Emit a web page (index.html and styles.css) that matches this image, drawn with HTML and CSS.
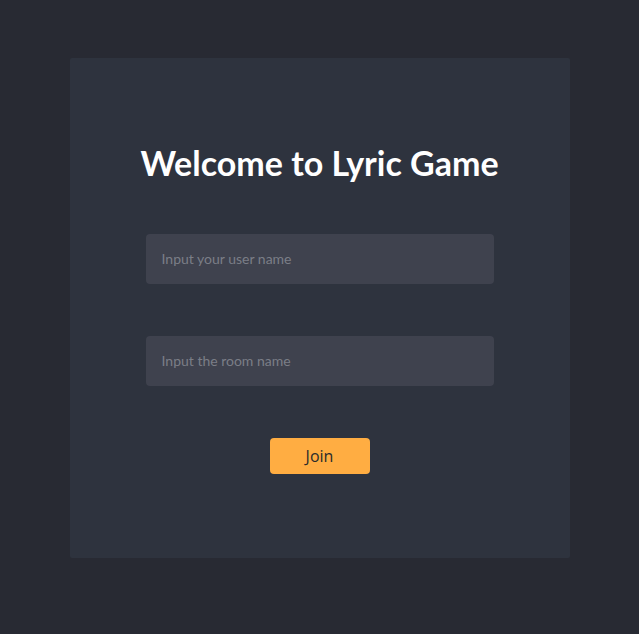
FILE: index.html
```html
<!DOCTYPE html>
<html>
<head>
<meta charset="utf-8">
<link rel="stylesheet" href="styles.css">
</head>
<body>
<main class="page">
  <section class="card">
    <h1 class="title">Welcome to Lyric Game</h1>
    <input class="field" type="text" placeholder="Input your user name">
    <input class="field" type="text" placeholder="Input the room name">
    <button class="join">Join</button>
  </section>
</main>
</body>
</html>
```
FILE: styles.css
```css
html, body {
  margin: 0;
  padding: 0;
  background: #282a33;
  height: 100%;
}
.page {
  display: flex;
  justify-content: center;
  padding-top: 58px;
}
.card {
  width: 500px;
  height: 500px;
  box-sizing: border-box;
  background: #2e333e;
  border-radius: 2px;
  padding: 0 76px;
  display: flex;
  flex-direction: column;
  align-items: center;
  font-family: Lato, "Noto Sans", sans-serif;
}
.title {
  margin: 82px 0 0;
  height: 42px;
  line-height: 46px;
  font-size: 34px;
  font-weight: 700;
  color: #ffffff;
  white-space: nowrap;
}
.field {
  width: 100%;
  height: 50px;
  box-sizing: border-box;
  margin-top: 52px;
  padding: 0 16px 2px;
  border: none;
  outline: none;
  border-radius: 4px;
  background: #3f424e;
  color: #e0e0e0;
  font-family: Lato, "Noto Sans", sans-serif;
  font-size: 14px;
}
.field::placeholder {
  color: #7b7e87;
}
.join {
  margin-top: 52px;
  width: 100px;
  height: 36px;
  border: none;
  border-radius: 4px;
  background: #ffad42;
  color: #2b2b2b;
  font-family: "Open Sans", "Noto Sans", sans-serif;
  font-size: 16px;
  cursor: pointer;
}
```
